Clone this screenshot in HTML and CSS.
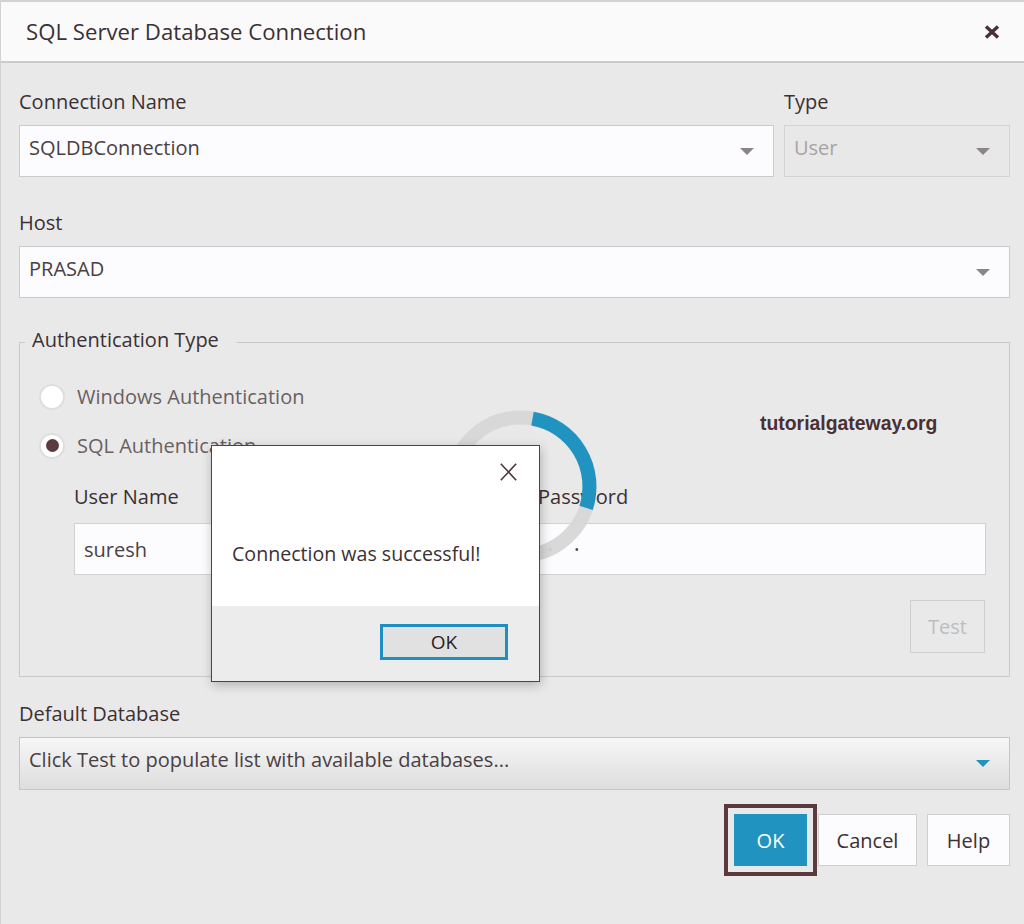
FILE: index.html
```html
<!DOCTYPE html>
<html lang="en">
<head>
<meta charset="utf-8">
<title>SQL Server Database Connection</title>
<link rel="stylesheet" href="styles.css">
</head>
<body>
<div class="dialog">
  <div class="titlebar">
    <span class="title">SQL Server Database Connection</span>
    <svg class="title-close" width="16" height="14" viewBox="0 0 16 14"><path d="M2 1.5 L14 12.5 M14 1.5 L2 12.5" stroke="#4a3034" stroke-width="3.4" fill="none"/></svg>
  </div>

  <div class="content">
    <div class="top-row">
      <div class="field grow">
        <div class="label">Connection Name</div>
        <div class="select"><span class="value">SQLDBConnection</span><span class="arrow"></span></div>
      </div>
      <div class="field type">
        <div class="label">Type</div>
        <div class="select disabled"><span class="value">User</span><span class="arrow"></span></div>
      </div>
    </div>

    <div class="field host">
      <div class="label">Host</div>
      <div class="select"><span class="value">PRASAD</span><span class="arrow"></span></div>
    </div>

    <fieldset class="auth">
      <legend>Authentication Type</legend>
      <div class="auth-body">
        <div class="radio-row"><span class="radio"></span><span>Windows Authentication</span></div>
        <div class="radio-row"><span class="radio checked"></span><span>SQL Authentication</span></div>
        <div class="creds">
          <div class="field">
            <div class="label">User Name</div>
            <div class="input">suresh</div>
          </div>
          <div class="field">
            <div class="label">Password</div>
            <div class="input pwd">••</div>
          </div>
        </div>
        <div class="test-row"><button class="btn-test">Test</button></div>
      </div>
    </fieldset>

    <div class="field dbfield">
      <div class="label">Default Database</div>
      <div class="select gradient"><span class="value">Click Test to populate list with available databases...</span><span class="arrow blue"></span></div>
    </div>

    <div class="actions">
      <button class="btn btn-ok">OK</button>
      <button class="btn btn-cancel">Cancel</button>
      <button class="btn btn-help">Help</button>
    </div>
  </div>

  <div class="watermark">tutorialgateway.org</div>

  <svg class="spinner" width="160" height="160" viewBox="0 0 160 160">
    <circle cx="80.5" cy="80.5" r="69" fill="none" stroke="#d6d6d6" stroke-opacity="0.93" stroke-width="14"/>
    <path d="M92.5 12.6 A69 69 0 0 1 146.1 101.8" fill="none" stroke="#2193c1" stroke-width="14"/>
  </svg>

  <div class="msgbox">
    <div class="msg-main">
      <svg class="msg-close" width="17" height="18" viewBox="0 0 17 18"><path d="M0.8 0.8 L16.2 17.2 M16.2 0.8 L0.8 17.2" stroke="#4b3a3d" stroke-width="1.6" fill="none"/></svg>
      <div class="msg-text">Connection was successful!</div>
    </div>
    <div class="msg-foot">
      <button class="msg-ok">OK</button>
    </div>
  </div>
</div>
</body>
</html>
```

FILE: styles.css
```css
html, body {
  margin: 0;
  padding: 0;
  background: #e9e9e9;
}

body {
  font-family: "Open Sans", "Noto Sans", sans-serif;
  color: #3b3034;
}

.dialog {
  position: relative;
  width: 1024px;
  height: 924px;
  box-sizing: border-box;
  border-top: 2px solid #cfd3d4;
  border-left: 1px solid #d2d4d4;
  background: #e9e9e9;
  overflow: hidden;
}

.titlebar {
  height: 59px;
  background: #fafafa;
  border-bottom: 2px solid #c9cccc;
  display: flex;
  align-items: center;
  justify-content: space-between;
  padding: 0 24px 0 25px;
}

.title {
  font-size: 22.2px;
  line-height: 30px;
  color: #3b3034;
}

.title-close {
  display: block;
}

.content {
  padding: 25px 14px 0 18px;
}

.label {
  font-size: 20px;
  line-height: 27px;
  margin-bottom: 10px;
  color: #3b3034;
}

.top-row {
  display: flex;
  gap: 10px;
}

.grow {
  flex: 1;
}

.type {
  width: 226px;
}

.select {
  height: 52px;
  box-sizing: border-box;
  background: #fcfcfe;
  border: 1px solid #cbcbcb;
  display: flex;
  align-items: center;
  justify-content: space-between;
  padding: 0 19px 0 9px;
  font-size: 20px;
  line-height: 27px;
  color: #4a4043;
}

.select .value {
  margin-bottom: 8px;
}

.select.disabled {
  background: #e8e8e8;
  border-color: #d3d3d3;
  color: #a9a3a4;
}

.select.gradient {
  height: 53px;
  background: linear-gradient(#f7f7f7, #dddddd);
  border-color: #c6c6c6;
}

.arrow {
  width: 0;
  height: 0;
  border-left: 7.5px solid transparent;
  border-right: 7.5px solid transparent;
  border-top: 7px solid #8c8587;
}

.arrow.blue {
  border-top-color: #2193c1;
}

.host {
  margin-top: 32px;
}

.auth {
  margin: 28px 0 0;
  padding: 0;
  border: 1px solid #c9c9c9;
  min-width: 0;
}

.auth legend {
  margin-left: 5px;
  padding: 0 18px 5px 7px;
  font-size: 20px;
  line-height: 27px;
  color: #3b3034;
}

.auth-body {
  padding: 25px 23px 23px 19px;
}

.radio-row {
  display: flex;
  align-items: center;
  gap: 12px;
  height: 27px;
  font-size: 20px;
  line-height: 27px;
  color: #6b5f62;
}

.radio-row + .radio-row {
  margin-top: 22px;
}

.radio {
  width: 26px;
  height: 26px;
  box-sizing: border-box;
  border-radius: 50%;
  background: #ffffff;
  border: 2px solid #dedede;
  display: flex;
  align-items: center;
  justify-content: center;
}

.radio.checked::after {
  content: "";
  width: 13px;
  height: 13px;
  border-radius: 50%;
  background: #5a3b40;
}

.creds {
  display: grid;
  grid-template-columns: 1fr 448px;
  column-gap: 26px;
  margin: 24px 0 0 35px;
}

.creds .label {
  margin-bottom: 13px;
}

.input {
  height: 52px;
  box-sizing: border-box;
  background: #fcfcfe;
  border: 1px solid #d2d2d2;
  display: flex;
  align-items: center;
  padding-left: 9px;
  font-size: 20px;
  line-height: 27px;
  color: #4a4043;
}

.input.pwd {
  font-size: 12px;
  letter-spacing: 22px;
  padding-left: 9px;
}

.test-row {
  display: flex;
  justify-content: flex-end;
  margin-top: 25px;
}

.btn-test {
  width: 75px;
  height: 53px;
  margin-right: 1px;
  border: 1px solid #cfcfcf;
  background: transparent;
  color: #bdbdbd;
  font-family: "Open Sans", "Noto Sans", sans-serif;
  font-size: 20px;
  padding: 0;
}

.dbfield {
  margin-top: 23px;
}

.actions {
  display: flex;
  justify-content: flex-end;
  gap: 10px;
  margin-top: 24px;
}

.btn {
  height: 52px;
  box-sizing: border-box;
  border: 1px solid #cfcfcf;
  background: #fcfcfe;
  color: #3b3034;
  font-family: "Open Sans", "Noto Sans", sans-serif;
  font-size: 20px;
  padding: 0;
}

.btn-ok {
  width: 73px;
  margin-right: 1px;
  background: #2193c1;
  border-color: #2193c1;
  color: #ffffff;
  outline: 4px solid #5b3a3d;
  outline-offset: 6px;
}

.btn-cancel {
  width: 99px;
}

.btn-help {
  width: 83px;
}

.watermark {
  position: absolute;
  left: 759px;
  top: 410px;
  font-family: "Liberation Sans", Arial, sans-serif;
  font-weight: 700;
  font-size: 19.4px;
  line-height: 22px;
  color: #4a3034;
}

.spinner {
  position: absolute;
  left: 439px;
  top: 404px;
}

.msgbox {
  position: absolute;
  left: 210px;
  top: 443px;
  width: 329px;
  height: 237px;
  box-sizing: border-box;
  border: 1px solid #5d3c40;
  background: #ffffff;
  box-shadow: 1px 3px 10px rgba(0, 0, 0, 0.24);
  display: flex;
  flex-direction: column;
}

.msg-main {
  height: 160px;
  display: flex;
  flex-direction: column;
}

.msg-close {
  align-self: flex-end;
  margin: 17px 22px 0 0;
}

.msg-text {
  margin: 60px 0 0 20px;
  font-size: 19.6px;
  line-height: 26px;
  color: #3b3034;
}

.msg-foot {
  flex: 1;
  background: #ececec;
  display: flex;
  justify-content: flex-end;
  align-items: flex-start;
  padding: 18px 31px 0 0;
}

.msg-ok {
  width: 128px;
  height: 36px;
  box-sizing: border-box;
  border: 3px solid #1e8fc0;
  background: #e1e1e1;
  color: #2a2024;
  font-family: "Open Sans", "Noto Sans", sans-serif;
  font-size: 19px;
  padding: 0;
}
```
